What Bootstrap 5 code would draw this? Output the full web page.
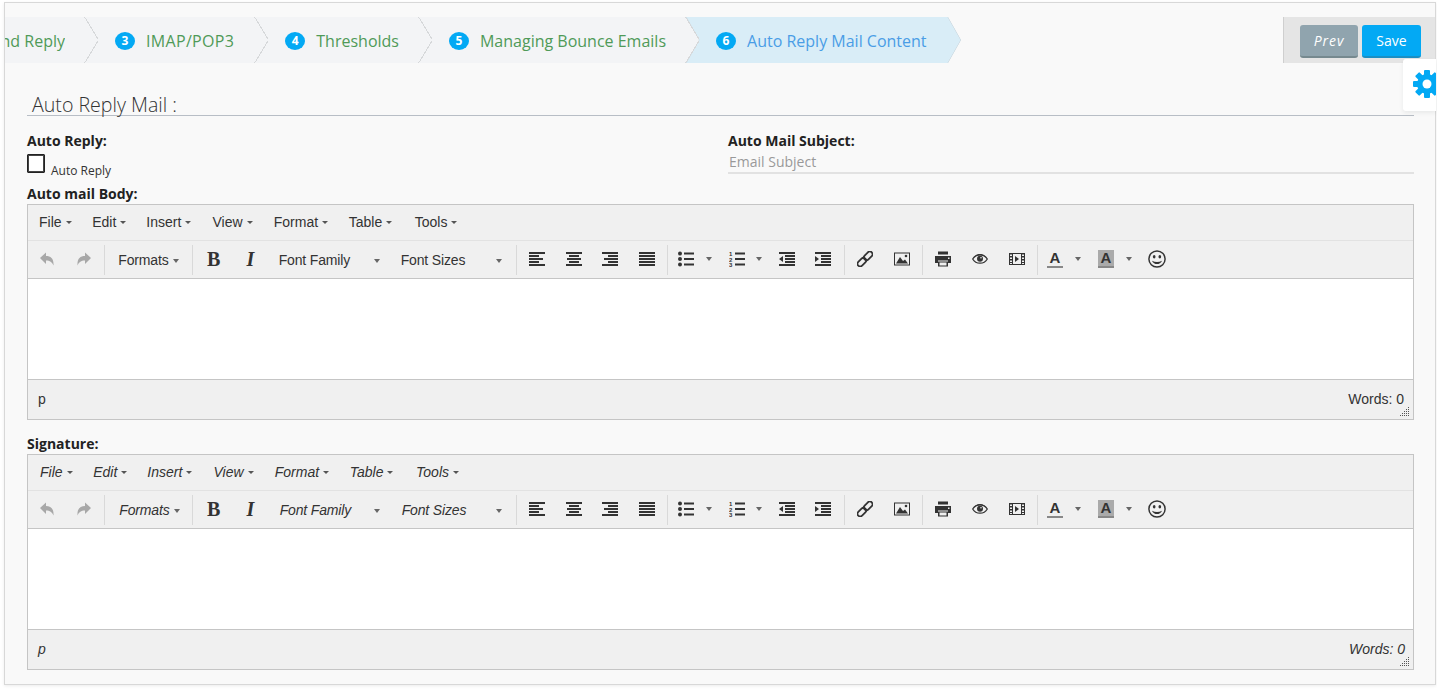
<!DOCTYPE html>
<html lang="en">
<head>
<meta charset="UTF-8">
<title>Auto Reply Mail Content</title>
<link rel="stylesheet" href="https://cdn.jsdelivr.net/npm/bootstrap@5.3.0/dist/css/bootstrap.min.css">
<style>
html, body { height: 689px; overflow: hidden; background: #fff; }
body { font-family: "Open Sans", sans-serif; font-size: 14px; color: #222; }
.panel-box { margin: 2px 1px 0 4px; height: 683px; background: #f9f9f9; border: 1px solid #d8d8d8; border-radius: 0; box-shadow: 0 1px 3px rgba(0,0,0,.08); position: relative; }
.top-strip { margin-top: 14px; height: 46px; }
.step-track { background: linear-gradient(#f3f4f6, #f3f4f6) left top / 694px 100% no-repeat; overflow: hidden; }
.step-item { position: relative; padding: 1px 20px 0 30px; height: 46px; color: #4f9a58; font-size: 16px; white-space: nowrap; }
.step-item::after { content: ""; position: absolute; right: -13px; top: 0; width: 14px; height: 46px; z-index: 2;
  background: linear-gradient(to bottom left, transparent calc(50% - 1px), #d6d8da calc(50% - 1px), #d6d8da 50%, transparent 50%) top / 100% 50% no-repeat,
              linear-gradient(to top left, transparent calc(50% - 1px), #d6d8da calc(50% - 1px), #d6d8da 50%, transparent 50%) bottom / 100% 50% no-repeat; }
.step-first { width: 80px; padding: 1px 20px 0 0; flex: none; justify-content: flex-end; }
.step-clip { overflow: hidden; }
.step-wide { letter-spacing: .33px; padding-right: 21px; }
.step-wide .step-dot { letter-spacing: 0; }
.step-wrap { width: 275px; height: 46px; background: #d9edf7; clip-path: polygon(0 0, 262px 0, 275px 50%, 262px 100%, 0 100%, 13px 50%); position: relative; color: #4a9de6; padding: 1px 0 0 30px; font-size: 16px; white-space: nowrap; flex: none; }
.step-edge { position: absolute; inset: 0; }
.step-dot { display: inline-flex; align-items: center; justify-content: center; width: 20px; height: 18px; border-radius: 50%; background: #03a9f4; color: #fff; font-size: 12px; font-weight: 700; margin-right: 11px; flex: none; }
.action-box { width: 152px; flex: none; background: #e5e5e5; border-left: 1px solid #cfcfcf; padding: 8px 14px 0 16px; gap: 4px; }
.act-btn { height: 33px; padding: 0; border: 0; border-bottom: 2px solid; border-radius: 3px; color: #fff; font-size: 14px; line-height: 31px; }
.act-prev { width: 58px; background: #90a4ae; border-color: #76898f; font-style: italic; letter-spacing: .9px; }
.act-save { width: 59px; background: #03a9f4; border-color: #1b8fc4; }
.gear-tab { position: absolute; right: -1px; top: 56px; width: 33px; height: 52px; background: #fff; border-radius: 3px 0 0 3px; overflow: hidden; }
.gear-tab svg { position: absolute; left: 10px; top: 11px; }
.form-area { padding: 0 21px 0 22px; }
.page-title { height: 53px; margin: 0; padding: 30px 0 0 5px; font-size: 19.6px; font-weight: 300; line-height: 24px; color: #333; border-bottom: 1px solid #b8bec6; }
.fld-row { margin-top: 15px; }
.fld-label { font-weight: 700; line-height: 20px; height: 20px; }
.chk-row { margin-top: 3px; }
.chk-box { width: 18px; height: 19px; border: 1px solid #222; outline: 1px solid #444; outline-offset: -2px; background: #fff; border-radius: 1px; }
.chk-text { font-size: 12px; color: #333; line-height: 14px; margin: 10px 0 0 6px; }
.subj-col { padding-left: 7.5px; }
.subj-input { height: 23px; padding: 0 1px; border-bottom: 2px solid #e2e2e2; color: #999; line-height: 21px; }
.body-label { margin-top: 6px; }
.sign-label { margin-top: 14px; }
.mce-box { height: 216px; border: 1px solid #c5c5c5; background: #f0f0f0; font-family: "Liberation Sans", sans-serif; font-size: 14px; color: #333; }
.mce-menu { height: 36px; padding: 0 0 2px 11px; gap: 20.6px; border-bottom: 1px solid #e2e2e2; }
.mce-item { line-height: 1; }
.mce-item:nth-child(3) { margin-left: -.6px; }
.mce-item:nth-child(4) { margin-left: .6px; }
.mce-item:nth-child(5) { margin-left: .6px; }
.mce-item:nth-child(7) { margin-left: 2px; }
.mce-caret { display: inline-block; width: 0; height: 0; border: 3px solid transparent; border-top-color: #555; border-bottom: 0; margin-left: 4px; vertical-align: middle; }
.mce-tools { height: 38px; border-bottom: 1px solid #c5c5c5; letter-spacing: -.15px; }
.mce-tools .mce-caret { border-width: 4px 3.5px 0; border-top-color: #666; }
.tool-group { height: 30px; padding: 0 2px; border-left: 1px solid #d9d9d9; }
.tool-group:first-child { border-left: 0; padding-left: 1px; }
.tool-btn { width: 36.67px; height: 30px; padding-bottom: 2px; display: flex; align-items: center; justify-content: center; }
.tool-txt { height: 30px; display: flex; align-items: center; }
.tool-txt .mce-caret { margin-left: auto; }
.w-formats { width: 83px; padding: 2px 11px 0 11px; }
.w-family { width: 122px; padding: 2px 11px 0 10px; }
.w-sizes { width: 123px; padding: 2px 12px 0 10px; }
.tool-split { height: 30px; padding-bottom: 2px; display: flex; align-items: center; }
.w-bul { width: 51px; padding-left: 8px; }
.w-bul .mce-caret { margin-left: 12px; }
.w-num { width: 47px; padding-left: 8px; }
.w-num .mce-caret { margin-left: 11px; }
.w-col { width: 50px; padding-left: 7px; }
.w-col .mce-caret { margin-left: 12px; }
.w-bg { width: 49px; padding-left: 8px; }
.w-bg .mce-caret { margin-left: 12px; }
.ic-bold { font: 700 20px/1 "Liberation Serif", serif; color: #333; }
.ic-ital { font: italic 700 20px/1 "Liberation Serif", serif; color: #333; }
.ic-color { width: 16px; text-align: center; font: 700 15px/15px "Liberation Sans", sans-serif; color: #333; border-bottom: 2px solid #888; height: 18px; }
.ic-fill { background: #aaa; }
.mce-body { height: 100px; background: #fff; }
.mce-status { height: 40px; border-top: 1px solid #c5c5c5; padding: 0 9px 1px 10px; position: relative; }
.mce-grip { position: absolute; right: 3px; bottom: 3px; }
.mce-italic { font-style: italic; }
.mce-italic .mce-menu { padding-left: 12px; }
.mce-italic .w-formats { padding-left: 12px; padding-right: 10px; }
.mce-italic .w-family { padding-left: 11px; }
.mce-italic .w-sizes { padding-left: 11px; }
.mce-italic .mce-status { padding-right: 8px; }
</style>
</head>
<body>
<svg width="0" height="0" class="d-block" style="position:absolute">
  <defs>
    <symbol id="i-undo" viewBox="0 0 16 16"><path d="M1 7 7 1.500V5c5 0 8 3 7.500 9.500C13 11 11 9.500 7 9.500V13z"/></symbol>
    <symbol id="i-redo" viewBox="0 0 16 16"><path d="M15 7 9 1.500V5c-5 0-8 3-7.500 9.500C3 11 5 9.500 9 9.500V13z"/></symbol>
    <symbol id="i-left" viewBox="0 0 16 16"><path d="M0 1h16v2H0zM0 4h10v2H0zM0 7h14v2H0zM0 10h10v2H0zM0 13h16v2H0z"/></symbol>
    <symbol id="i-center" viewBox="0 0 16 16"><path d="M0 1h16v2H0zM3 4h10v2H3zM1 7h14v2H1zM3 10h10v2H3zM0 13h16v2H0z"/></symbol>
    <symbol id="i-right" viewBox="0 0 16 16"><path d="M0 1h16v2H0zM6 4h10v2H6zM2 7h14v2H2zM6 10h10v2H6zM0 13h16v2H0z"/></symbol>
    <symbol id="i-just" viewBox="0 0 16 16"><path d="M0 1h16v2H0zM0 4h16v2H0zM0 7h16v2H0zM0 10h16v2H0zM0 13h16v2H0z"/></symbol>
    <symbol id="i-bul" viewBox="0 0 16 16"><circle cx="2" cy="2.500" r="2"/><circle cx="2" cy="8" r="2"/><circle cx="2" cy="13.500" r="2"/><path d="M6 1.500h10v2H6zM6 7h10v2H6zM6 12.500h10v2H6z"/></symbol>
    <symbol id="i-num" viewBox="0 0 16 16"><path d="M6 1.500h10v2H6zM6 7h10v2H6zM6 12.500h10v2H6z"/><text x="0" y="5" font-size="6" font-weight="700" font-style="normal" font-family="Liberation Sans">1</text><text x="0" y="10.500" font-size="6" font-weight="700" font-style="normal" font-family="Liberation Sans">2</text><text x="0" y="16" font-size="6" font-weight="700" font-style="normal" font-family="Liberation Sans">3</text></symbol>
    <symbol id="i-out" viewBox="0 0 16 16"><path d="M0 1h16v2H0zM6 4h10v2H6zM6 7h10v2H6zM6 10h10v2H6zM0 13h16v2H0zM4 5v6L0 8z"/></symbol>
    <symbol id="i-ind" viewBox="0 0 16 16"><path d="M0 1h16v2H0zM6 4h10v2H6zM6 7h10v2H6zM6 10h10v2H6zM0 13h16v2H0zM0 5v6l4-3z"/></symbol>
    <symbol id="i-link" viewBox="0 0 16 16"><g transform="rotate(-45 8 8)" fill="none" stroke="currentColor" stroke-width="1.800"><rect x="-1.500" y="5.300" width="10" height="5.400" rx="2.700"/><rect x="7.500" y="5.300" width="10" height="5.400" rx="2.700"/></g></symbol>
    <symbol id="i-img" viewBox="0 0 16 16"><path fill-rule="evenodd" d="M0 1.500h16v13H0zM1 2.500v11h14v-11z"/><path d="M2 12.500 6 6l3 4 2-1.500 3 4z"/><circle cx="12" cy="5" r="1.300"/></symbol>
    <symbol id="i-print" viewBox="0 0 16 16"><path d="M3 .5h10v3H3z"/><path fill-rule="evenodd" d="M0 5h16v7h-3V9.500H3V12H0zM13 6.500v1.500h1.500V6.500z"/><path fill-rule="evenodd" d="M3 10.500h10v5H3zM4.500 11.500v3h7v-3z"/></symbol>
    <symbol id="i-eye" viewBox="0 0 16 16"><path d="M.7 8C2.500 5 5 3.800 8 3.800S13.500 5 15.300 8C13.500 11 11 12.200 8 12.200S2.500 11 .7 8z" fill="none" stroke="currentColor" stroke-width="1.300"/><path d="M1 7C3 4 5.500 3 8 3s5 1 7 4C13 5 10.500 4.300 8 4.300S3 5 1 7z"/><circle cx="8" cy="7.800" r="3"/><circle cx="9" cy="6.800" r=".8" fill="#f0f0f0"/></symbol>
    <symbol id="i-media" viewBox="0 0 16 16"><path fill-rule="evenodd" d="M0 2h16v12H0zM4 3v10h8V3zM1 3.500V5h2V3.500zM1 6.500V8h2V6.500zM1 9.500V11h2V9.500zM1 12v1h2v-1zM13 3.500V5h2V3.500zM13 6.500V8h2V6.500zM13 9.500V11h2V9.500zM13 12v1h2v-1z"/><path d="M6 5v6l4-3z"/></symbol>
    <symbol id="i-smile" viewBox="0 0 16 16"><circle cx="8" cy="8" r="7.200" fill="none" stroke="currentColor" stroke-width="1.300"/><ellipse cx="5.500" cy="6" rx="1.200" ry="1.500"/><ellipse cx="10.500" cy="6" rx="1.200" ry="1.500"/><path d="M3.500 9.500c1 2.200 2.700 3 4.500 3s3.500-.8 4.500-3c-1.500.8-3 1.100-4.500 1.100s-3-.3-4.500-1.100z"/></symbol>
  </defs>
</svg>

<div class="card panel-box">
  <div class="d-flex top-strip">
    <div class="flex-grow-1 d-flex step-track">
      <div class="d-flex align-items-center step-item step-first">
        <div class="step-clip d-flex justify-content-end"><span class="text-nowrap">Send Reply</span></div>
      </div>
      <div class="d-flex align-items-center step-item step-wide"><span class="step-dot">3</span>IMAP/POP3</div>
      <div class="d-flex align-items-center step-item"><span class="step-dot">4</span>Thresholds</div>
      <div class="d-flex align-items-center step-item"><span class="step-dot">5</span>Managing Bounce Emails</div>
      <div class="d-flex align-items-center step-wrap">
        <span class="step-dot">6</span>Auto Reply Mail Content
        <svg class="step-edge" width="275" height="46"><path d="M0 0 13 23 0 46M262 0 275 23 262 46" fill="none" stroke="#c9d3d9"/></svg>
      </div>
    </div>
    <div class="d-flex action-box">
      <button class="btn act-btn act-prev" type="button">Prev</button>
      <button class="btn act-btn act-save" type="button">Save</button>
    </div>
  </div>
  <div class="gear-tab shadow-sm">
    <svg width="28" height="28" viewBox="0 0 28 28" fill="#03a9f4">
      <rect x="11" y="0" width="6" height="28" rx="1"/>
      <rect x="11" y="0" width="6" height="28" rx="1" transform="rotate(45 14 14)"/>
      <rect x="11" y="0" width="6" height="28" rx="1" transform="rotate(90 14 14)"/>
      <rect x="11" y="0" width="6" height="28" rx="1" transform="rotate(135 14 14)"/>
      <circle cx="14" cy="14" r="10"/>
      <circle cx="14" cy="14" r="4.500" fill="#fff"/>
    </svg>
  </div>

  <div class="form-area">
    <h4 class="page-title">Auto Reply Mail :</h4>
    <div class="row gx-0 fld-row">
      <div class="col-6">
        <div class="fld-label">Auto Reply:</div>
        <div class="d-flex chk-row">
          <div class="chk-box"></div>
          <div class="chk-text">Auto Reply</div>
        </div>
      </div>
      <div class="col-6 subj-col">
        <div class="fld-label">Auto Mail Subject:</div>
        <div class="subj-input">Email Subject</div>
      </div>
    </div>
    <div class="fld-label body-label">Auto mail Body:</div>

    <div class="mce-box" id="editor-body">
      <div class="d-flex align-items-center mce-menu">
        <span class="mce-item">File<i class="mce-caret"></i></span>
        <span class="mce-item">Edit<i class="mce-caret"></i></span>
        <span class="mce-item">Insert<i class="mce-caret"></i></span>
        <span class="mce-item">View<i class="mce-caret"></i></span>
        <span class="mce-item">Format<i class="mce-caret"></i></span>
        <span class="mce-item">Table<i class="mce-caret"></i></span>
        <span class="mce-item">Tools<i class="mce-caret"></i></span>
      </div>
      <div class="d-flex align-items-center mce-tools">
        <div class="d-flex tool-group">
          <div class="tool-btn"><svg width="16" height="16" fill="#a8a8a8"><use href="#i-undo"/></svg></div>
          <div class="tool-btn"><svg width="16" height="16" fill="#a8a8a8"><use href="#i-redo"/></svg></div>
        </div>
        <div class="d-flex tool-group">
          <div class="tool-txt w-formats">Formats<i class="mce-caret"></i></div>
        </div>
        <div class="d-flex tool-group">
          <div class="tool-btn"><span class="ic-bold">B</span></div>
          <div class="tool-btn"><span class="ic-ital">I</span></div>
          <div class="tool-txt w-family">Font Family<i class="mce-caret"></i></div>
          <div class="tool-txt w-sizes">Font Sizes<i class="mce-caret"></i></div>
        </div>
        <div class="d-flex tool-group">
          <div class="tool-btn"><svg width="16" height="16" fill="#333"><use href="#i-left"/></svg></div>
          <div class="tool-btn"><svg width="16" height="16" fill="#333"><use href="#i-center"/></svg></div>
          <div class="tool-btn"><svg width="16" height="16" fill="#333"><use href="#i-right"/></svg></div>
          <div class="tool-btn"><svg width="16" height="16" fill="#333"><use href="#i-just"/></svg></div>
        </div>
        <div class="d-flex tool-group">
          <div class="tool-split w-bul"><svg width="16" height="16" fill="#333"><use href="#i-bul"/></svg><i class="mce-caret"></i></div>
          <div class="tool-split w-num"><svg width="16" height="16" fill="#333"><use href="#i-num"/></svg><i class="mce-caret"></i></div>
          <div class="tool-btn"><svg width="16" height="16" fill="#333"><use href="#i-out"/></svg></div>
          <div class="tool-btn"><svg width="16" height="16" fill="#333"><use href="#i-ind"/></svg></div>
        </div>
        <div class="d-flex tool-group">
          <div class="tool-btn"><svg width="16" height="16" color="#333" fill="#333"><use href="#i-link"/></svg></div>
          <div class="tool-btn"><svg width="16" height="16" fill="#333"><use href="#i-img"/></svg></div>
        </div>
        <div class="d-flex tool-group">
          <div class="tool-btn"><svg width="16" height="16" fill="#333"><use href="#i-print"/></svg></div>
          <div class="tool-btn"><svg width="16" height="16" color="#333" fill="#333"><use href="#i-eye"/></svg></div>
          <div class="tool-btn"><svg width="16" height="16" fill="#333"><use href="#i-media"/></svg></div>
        </div>
        <div class="d-flex tool-group">
          <div class="tool-split w-col"><span class="ic-color">A</span><i class="mce-caret"></i></div>
          <div class="tool-split w-bg"><span class="ic-color ic-fill">A</span><i class="mce-caret"></i></div>
          <div class="tool-btn"><svg width="18" height="18" color="#333" fill="#333"><use href="#i-smile"/></svg></div>
        </div>
      </div>
      <div class="mce-body"></div>
      <div class="d-flex align-items-center justify-content-between mce-status">
        <span>p</span>
        <span>Words: 0</span>
        <svg class="mce-grip" width="10" height="9" fill="#555"><path d="M8 0h1v1H8zM6 2h1v1H6zM8 2h1v1H8zM4 4h1v1H4zM6 4h1v1H6zM8 4h1v1H8zM2 6h1v1H2zM4 6h1v1H4zM6 6h1v1H6zM8 6h1v1H8zM0 8h1v1H0zM2 8h1v1H2zM4 8h1v1H4zM6 8h1v1H6zM8 8h1v1H8z"/></svg>
      </div>
    </div>

    <div class="fld-label sign-label">Signature:</div>
    <div id="editor-sign"></div>
  </div>
</div>

<script>
    // second editor is the same toolbar, only italic
    const signEditor = document.getElementById('editor-body').cloneNode(true);
    signEditor.id = 'editor-sign';
    signEditor.classList.add('mce-italic');
    document.getElementById('editor-sign').replaceWith(signEditor);
</script>
<script src="https://cdn.jsdelivr.net/npm/bootstrap@5.3.0/dist/js/bootstrap.bundle.min.js"></script>
</body>
</html>
